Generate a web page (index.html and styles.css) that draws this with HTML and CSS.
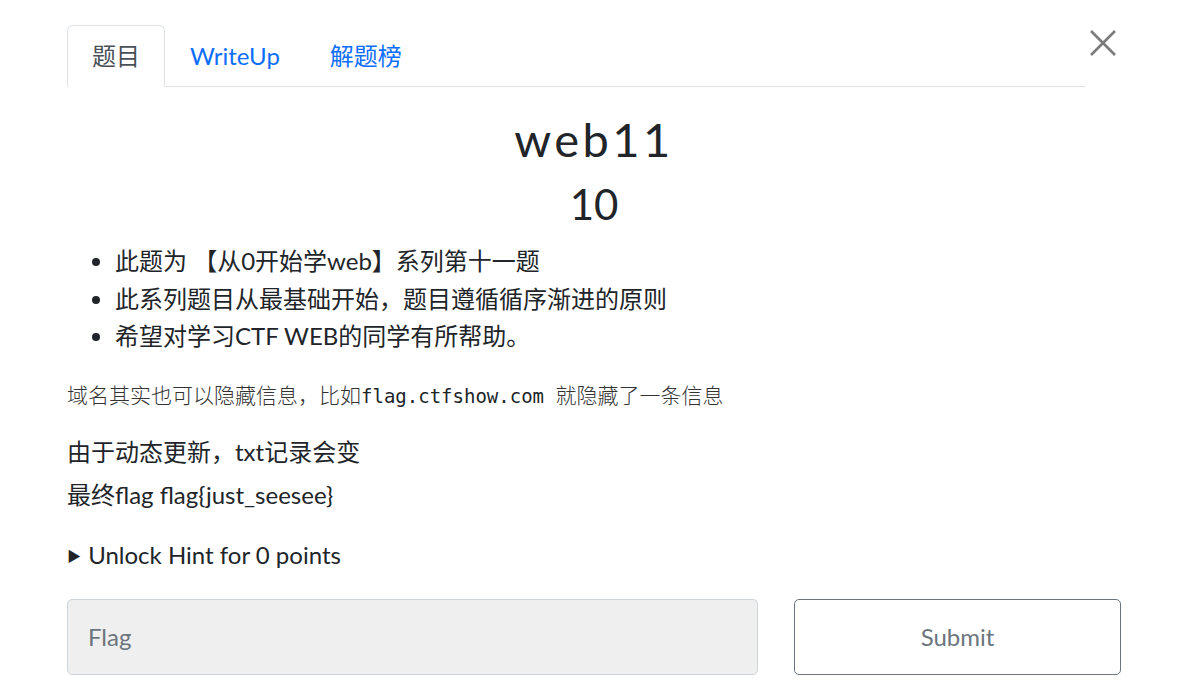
FILE: index.html
```html
<!DOCTYPE html>
<html lang="zh">
<head>
<meta charset="utf-8">
<title>web11</title>
<link rel="stylesheet" href="styles.css">
</head>
<body>
<div class="modal">
  <div class="header">
    <ul class="tabs">
      <li class="tab active">题目</li>
      <li class="tab">WriteUp</li>
      <li class="tab">解题榜</li>
    </ul>
    <button class="close" aria-label="Close">
      <svg width="28" height="28" viewBox="0 0 28 28"><path d="M2 2 L26 26 M26 2 L2 26" stroke="#7b7b7b" stroke-width="2.6" fill="none"/></svg>
    </button>
  </div>
  <h2 class="name">web11</h2>
  <h3 class="value">10</h3>
  <ul class="desc">
    <li>此题为 【从0开始学web】系列第十一题</li>
    <li>此系列题目从最基础开始，题目遵循循序渐进的原则</li>
    <li>希望对学习CTF WEB的同学有所帮助。</li>
  </ul>
  <p class="small">域名其实也可以隐藏信息，比如<code>flag.ctfshow.com </code>就隐藏了一条信息</p>
  <p class="line first">由于动态更新，txt记录会变</p>
  <p class="line">最终flag flag{just_seesee}</p>
  <div class="hint"><span class="tri">&#9654;</span> Unlock Hint for 0 points</div>
  <div class="submit-row">
    <input class="flag" type="text" placeholder="Flag">
    <button class="submit">Submit</button>
  </div>
</div>
</body>
</html>
```
FILE: styles.css
```css
html, body {
  margin: 0;
  padding: 0;
  background: #fff;
}
body {
  font-family: "Lato", "Noto Sans CJK SC", sans-serif;
  color: #212529;
  font-size: 24px;
}
.modal {
  width: 1054px;
  margin-left: 67px;
  padding-top: 25px;
}
.header {
  display: flex;
  align-items: flex-start;
}
.tabs {
  flex: 1;
  display: flex;
  list-style: none;
  margin: 0;
  padding: 0;
  border-bottom: 1px solid #dee2e6;
}
.tab {
  padding: 12px 24px;
  line-height: 36px;
  color: #0d6efd;
  border: 1px solid transparent;
  border-top-left-radius: 6px;
  border-top-right-radius: 6px;
  margin-bottom: -1px;
}
.tab.active {
  color: #495057;
  border-color: #dee2e6 #dee2e6 #fff;
  background: #fff;
}
.close {
  width: 36px;
  height: 36px;
  border: 0;
  background: none;
  padding: 0 0 0 4px;
  margin-top: 0;
  cursor: pointer;
}
.close svg { display: block; }
.name {
  margin: 25px 0 0;
  text-align: center;
  font-size: 47px;
  font-weight: 400;
  letter-spacing: 3.5px;
  line-height: 55px;
}
.value {
  margin: 12px 0 0;
  text-align: center;
  font-size: 42px;
  font-weight: 400;
  line-height: 50px;
}
.desc {
  margin: 13px 0 0;
  padding-left: 48px;
  line-height: 37.5px;
}
.desc li {
  height: 37.5px;
}
.small {
  margin: 23px 0 0;
  font-size: 21px;
  line-height: 32px;
  color: #333;
  font-family: "Noto Sans CJK SC", "Lato", sans-serif;
  font-weight: 300;
}
.small code {
  font-family: "DejaVu Sans Mono", monospace;
  font-size: 19px;
  color: #212529;
  font-weight: 400;
}
.line {
  margin: 0;
  line-height: 43px;
}
.line.first {
  margin-top: 18px;
}
.hint {
  margin-top: 21px;
  line-height: 36px;
}
.tri {
  font-size: 14px;
  display: inline-block;
  vertical-align: 3px;
  margin-right: 1px;
}
.submit-row {
  display: flex;
  gap: 36px;
  margin-top: 25px;
}
.flag {
  width: 691px;
  box-sizing: border-box;
  height: 76px;
  background: #efefef;
  border: 1px solid #ced4da;
  border-radius: 5px;
  padding: 0 20px;
  font-family: "Lato", sans-serif;
  font-size: 24px;
  color: #495057;
}
.flag::placeholder { color: #6c757d; }
.submit {
  flex: 1;
  height: 76px;
  box-sizing: border-box;
  background: #fff;
  border: 1px solid #6c757d;
  border-radius: 5px;
  font-family: "Lato", sans-serif;
  font-size: 24px;
  color: #6c757d;
}
```
